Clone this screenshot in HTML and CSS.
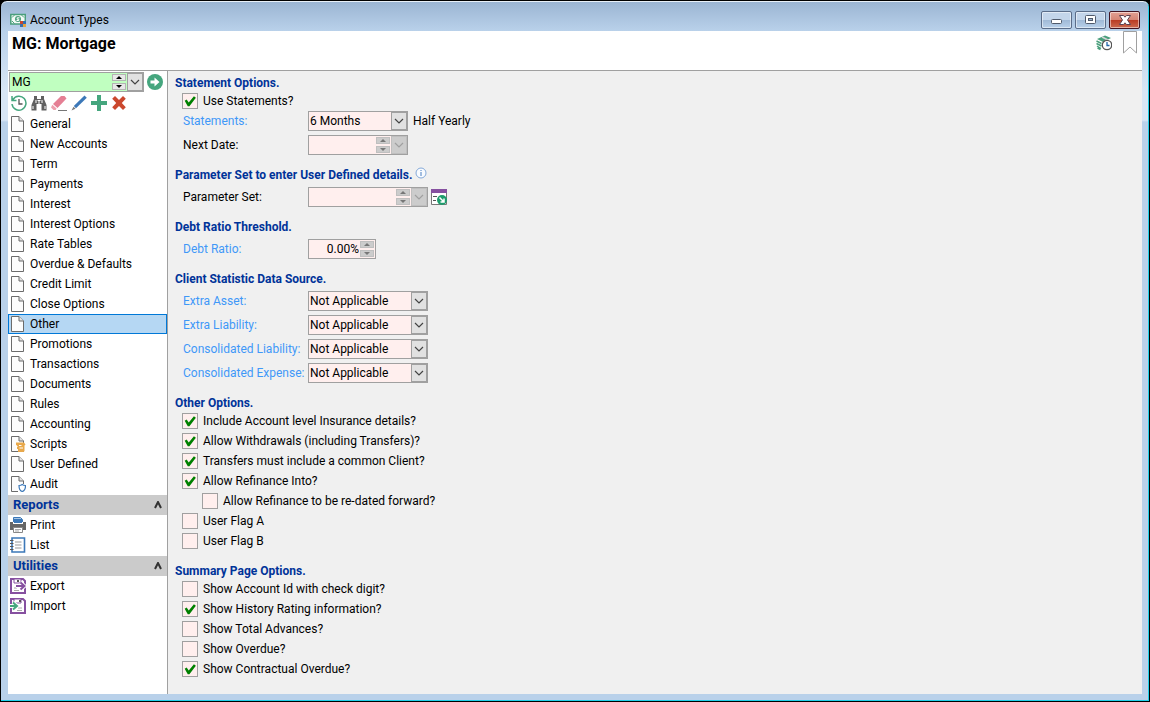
FILE: index.html
```html
<!DOCTYPE html>
<html lang="en">
<head>
  <meta charset="UTF-8" />
  <meta name="viewport" content="width=device-width, initial-scale=1.0"/>
  <title>Account Types</title>
  <link rel="stylesheet" href="styles.css">
</head>
<body>
  <!-- shared icons -->
  <svg class="sprite" aria-hidden="true">
    <symbol id="page" viewBox="0 0 16 16">
      <path d="M1.5 .5H9L13.500 5V15.500H1.500Z" fill="#fcfcfc" stroke="#6b6b6b"/>
      <path d="M9 .5V5h4.500" fill="#e4e4e4" stroke="#6b6b6b"/>
    </symbol>
    <symbol id="chevron" viewBox="0 0 10 6">
      <path d="M1 1l4 4 4-4" fill="none" stroke="currentColor" stroke-width="1.2"/>
    </symbol>
    <symbol id="up" viewBox="0 0 6 3"><path d="M3 0l3 3H0z" fill="currentColor"/></symbol>
    <symbol id="down" viewBox="0 0 6 3"><path d="M0 0h6L3 3z" fill="currentColor"/></symbol>
  </svg>

  <div class="window">
    <header class="titlebar">
      <svg class="icon" viewBox="0 0 16 16">
        <rect x=".8" y="2.500" width="14.500" height="9.500" fill="#f3faf6" stroke="#4a9f7c" stroke-width="1.500"/>
        <path d="M2 5.500L4.500 3M2 9l2.500 2.500M11.500 3L14 5.500" stroke="#4a9f7c"/>
        <circle cx="8" cy="7" r="3" fill="#4a9f7c"/>
        <path d="M9.500 5.800H7.200v1.400h1.600v1.300H6.500" fill="none" stroke="#fff"/>
        <path d="M10 9h3v3h-3z" fill="#c9472b"/><path d="M13 9h3v3h-3z" fill="#2f6fb4"/>
        <path d="M10 12h3v3h-3z" fill="#3a6fae"/><path d="M13 12h3v3h-3z" fill="#e8a33d"/>
      </svg>
      <span class="caption">Account Types</span>
      <div class="window-buttons">
        <button aria-label="Minimize"><svg viewBox="0 0 16 12"><rect x="2.500" y="5.500" width="10" height="4" rx="1" fill="#fff" stroke="#505a6b"/></svg></button>
        <button aria-label="Maximize"><svg viewBox="0 0 16 12"><rect x="2.500" y="1.500" width="10" height="8" rx="1" fill="#fff" stroke="#505a6b"/><rect x="5.500" y="4.500" width="4" height="2" fill="#9db6d2" stroke="#505a6b"/></svg></button>
        <button class="close" aria-label="Close"><svg viewBox="0 0 16 12"><path d="M2.500 1.500h4L8 3.200l1.500-1.700h4L10.500 6l3 4.500h-4L8 8.800l-1.500 1.700h-4L5.500 6z" fill="#fff" stroke="#5b4250"/></svg></button>
      </div>
    </header>

    <div class="content">
      <div class="page-header">
        <h1>MG: Mortgage</h1>
        <div class="header-icons">
          <svg class="icon" viewBox="0 0 16 16">
            <path d="M1 4l8-3.500 6 2.500-8 4z" fill="#4a9f7c"/>
            <path d="M6 2l6 3" stroke="#d5d5d5" stroke-width="1.500"/>
            <path d="M.5 6l5 2.500M.5 8.500l5 2.500M1 11l4 2.500M1.500 13l3 1.500" fill="none" stroke="#4a9f7c" stroke-width="1.400"/>
            <circle cx="11" cy="10" r="4.700" fill="#fff" stroke="#555" stroke-width="1.300"/>
            <path d="M11 7v3.500h2.500" fill="none" stroke="#2367ac" stroke-width="1.300"/>
          </svg>
          <svg class="bookmark" viewBox="0 0 14 23"><path d="M.5 .5h13v21.500L7 16 .5 22z" fill="#fff" stroke="#a0a0a0"/></svg>
        </div>
      </div>

      <div class="columns">
        <nav class="sidebar">
          <div class="picker">
            <div class="field key">
              <input type="text" value="MG" aria-label="Account type">
              <span class="spin"><button aria-label="Previous"><svg><use href="#up"/></svg></button><button aria-label="Next"><svg><use href="#down"/></svg></button></span>
              <button class="drop" aria-label="Open list"><svg><use href="#chevron"/></svg></button>
            </div>
            <button class="tool" aria-label="Go">
              <svg class="icon" viewBox="0 0 16 16"><circle cx="8" cy="8" r="8" fill="#45a67e"/><path d="M3.500 6.500h4V3.500L12.500 8l-5 4.500v-3h-4z" fill="#fff"/></svg>
            </button>
          </div>
          <div class="toolbar">
            <button class="tool" aria-label="History"><svg class="icon" viewBox="0 0 16 16"><path d="M2 4.500A7 7 0 1 1 1 9M1 1v4.500h4.500" fill="none" stroke="#45a67e" stroke-width="1.500"/><path d="M8 4v5h3.500" fill="none" stroke="#555" stroke-width="1.300"/></svg></button>
            <button class="tool" aria-label="Find"><svg class="icon" viewBox="0 0 16 16"><path d="M3 1h3v3h4V1h3v3l2.500 6v5.500h-5V9h-5v6.500h-5V10L3 4z" fill="#606060"/><path d="M5 5v3M11 5v3M6.500 5.500h3M2 11v3M14 11v3M8 5v4" stroke="#fff"/></svg></button>
            <button class="tool" aria-label="Clear"><svg class="icon" viewBox="0 0 16 16"><path d="M10 1h3.500L15.500 3.500 6.500 13 2 9z" fill="#e57f94"/><path d="M1.300 9.800l4.300 3.700-1 1.500H2.500L0 12.500z" fill="#eda0ae"/><path d="M7 15.500h9" stroke="#777"/></svg></button>
            <button class="tool" aria-label="Edit"><svg class="icon" viewBox="0 0 16 16"><path d="M13.500 .5l2.300 2.300L5 13.200 2.800 11z" fill="#3c78b8"/><path d="M2.500 11.700l2 2L.5 15.500z" fill="#777"/></svg></button>
            <button class="tool" aria-label="Add"><svg class="icon" viewBox="0 0 16 16"><path d="M6 0h4v6h6v4h-6v6H6v-6H0V6h6z" fill="#45a67e"/></svg></button>
            <button class="tool" aria-label="Delete"><svg class="icon" viewBox="0 0 16 16"><path d="M4 1l4 4 4-4 2.800 2.800-4 4.200 4 4.200L12 15l-4-4-4 4-2.800-2.800 4-4.200-4-4.200z" fill="#cb482e"/></svg></button>
          </div>

          <ul class="menu">
            <li><a href="#"><svg class="icon"><use href="#page"/></svg>General</a></li>
            <li><a href="#"><svg class="icon"><use href="#page"/></svg>New Accounts</a></li>
            <li><a href="#"><svg class="icon"><use href="#page"/></svg>Term</a></li>
            <li><a href="#"><svg class="icon"><use href="#page"/></svg>Payments</a></li>
            <li><a href="#"><svg class="icon"><use href="#page"/></svg>Interest</a></li>
            <li><a href="#"><svg class="icon"><use href="#page"/></svg>Interest Options</a></li>
            <li><a href="#"><svg class="icon"><use href="#page"/></svg>Rate Tables</a></li>
            <li><a href="#"><svg class="icon"><use href="#page"/></svg>Overdue &amp; Defaults</a></li>
            <li><a href="#"><svg class="icon"><use href="#page"/></svg>Credit Limit</a></li>
            <li><a href="#"><svg class="icon"><use href="#page"/></svg>Close Options</a></li>
            <li><a href="#" class="selected"><svg class="icon"><use href="#page"/></svg>Other</a></li>
            <li><a href="#"><svg class="icon"><use href="#page"/></svg>Promotions</a></li>
            <li><a href="#"><svg class="icon"><use href="#page"/></svg>Transactions</a></li>
            <li><a href="#"><svg class="icon"><use href="#page"/></svg>Documents</a></li>
            <li><a href="#"><svg class="icon"><use href="#page"/></svg>Rules</a></li>
            <li><a href="#"><svg class="icon"><use href="#page"/></svg>Accounting</a></li>
            <li><a href="#"><svg class="icon" viewBox="0 0 16 16"><use href="#page"/><path d="M6 6.500h8l1.500 2-1 1V15l-1 1H8v-3H7V9.500L6 9z" fill="#e9a94b"/><path d="M9 9.500h2.500M9.500 12H13M5.500 10.500h2" stroke="#fff"/></svg>Scripts</a></li>
            <li><a href="#"><svg class="icon"><use href="#page"/></svg>User Defined</a></li>
            <li><a href="#"><svg class="icon" viewBox="0 0 16 16"><use href="#page"/><path d="M8 8h8v8H8z" fill="#fff"/><path d="M9 9.500q2 0 3.200-1 1.300 1 3.300 1 0 5-3.300 6Q9 14.500 9 9.500z" fill="#fff" stroke="#3c78b8" stroke-width="1.200"/></svg>Audit</a></li>
          </ul>

          <h2 class="group">Reports <svg viewBox="0 0 8 8"><path d="M1 7l3-6 3 6" fill="none" stroke="#333" stroke-width="2"/></svg></h2>
          <ul class="menu">
            <li><a href="#"><svg class="icon" viewBox="0 0 16 16"><path d="M3.500 5V.5h7l2 2V5" fill="#a9c6e4" stroke="#3c78b8"/><path d="M4 2h8v4H4z" fill="#3c78b8"/><path d="M0 5h3v2h10V5h3v8h-3v-2H3v2H0z" fill="#666"/><path d="M3.500 10.500h9v5h-9z" fill="#fff" stroke="#888"/><path d="M5 12.500h6M5 14h4" stroke="#aaa"/></svg>Print</a></li>
            <li><a href="#"><svg class="icon" viewBox="0 0 16 16"><path d="M2 1h12.500v14H2z" fill="#fff" stroke="#3c78b8" stroke-width="1.600"/><path d="M5 5h6.500M5 8h6.500M5 11h6.500" stroke="#999"/><path d="M0 3.500h3.500M0 6.500h3.500M0 9.500h3.500M0 12.500h3.500" stroke="#555"/></svg>List</a></li>
          </ul>

          <h2 class="group">Utilities <svg viewBox="0 0 8 8"><path d="M1 7l3-6 3 6" fill="none" stroke="#333" stroke-width="2"/></svg></h2>
          <ul class="menu">
            <li><a href="#"><svg class="icon" viewBox="0 0 16 16"><path d="M1 1h12l2 2v12H1z" fill="#fff" stroke="#8650a0" stroke-width="2"/><path d="M4 1h7v4H4z" fill="#fff" stroke="#8650a0"/><path d="M8 2v2" stroke="#555" stroke-width="2"/><path d="M4 10h3M4 12.500h5" stroke="#aaa"/><path d="M6 8h8M10.500 4.500L14.500 8l-4 3.500" fill="none" stroke="#fff" stroke-width="4"/><path d="M6 8h8M10.500 4.500L14.500 8l-4 3.500" fill="none" stroke="#8650a0" stroke-width="2"/></svg>Export</a></li>
            <li><a href="#"><svg class="icon" viewBox="0 0 16 16"><path d="M1 1h12l2 2v12H1z" fill="#fff" stroke="#8650a0" stroke-width="2"/><path d="M4 1h7v4H4z" fill="#fff" stroke="#8650a0"/><path d="M10 2v2" stroke="#555" stroke-width="2"/><path d="M8 10h4M7 12.500h5" stroke="#aaa"/><path d="M0 8h6M3 4.500L7 8l-4 3.500" fill="none" stroke="#fff" stroke-width="4"/><path d="M0 8h6M3 4.500L7 8l-4 3.500" fill="none" stroke="#45a67e" stroke-width="2"/></svg>Import</a></li>
          </ul>
        </nav>

        <main class="form">
          <section>
            <h2>Statement Options.</h2>
            <label class="check"><input type="checkbox" checked>Use Statements?</label>
            <div class="row">
              <label class="linked" for="statements">Statements:</label>
              <div class="field short">
                <select id="statements"><option>6 Months</option></select>
                <span class="drop"><svg><use href="#chevron"/></svg></span>
              </div>
              <span class="note">Half Yearly</span>
            </div>
            <div class="row">
              <label for="next-date">Next Date:</label>
              <div class="field short disabled">
                <input type="text" id="next-date" disabled>
                <span class="spin"><button disabled aria-label="Later"><svg><use href="#up"/></svg></button><button disabled aria-label="Earlier"><svg><use href="#down"/></svg></button></span>
                <button class="drop" disabled aria-label="Calendar"><svg><use href="#chevron"/></svg></button>
              </div>
            </div>
          </section>

          <section>
            <h2>Parameter Set to enter User Defined details. <svg class="info" viewBox="0 0 12 12"><circle cx="6" cy="6" r="5" fill="#f8fbff" stroke="#84a9d8"/><path d="M6 5v4M6 3v1" stroke="#4a7fc0"/></svg></h2>
            <div class="row">
              <label for="parameter-set">Parameter Set:</label>
              <div class="field disabled">
                <input type="text" id="parameter-set" disabled>
                <span class="spin"><button disabled aria-label="Previous set"><svg><use href="#up"/></svg></button><button disabled aria-label="Next set"><svg><use href="#down"/></svg></button></span>
                <button class="drop" disabled aria-label="Open sets"><svg><use href="#chevron"/></svg></button>
              </div>
              <button class="tool open" aria-label="Open parameter set">
                <svg class="icon" viewBox="0 0 16 16"><path d="M.5 1v14.500h15V1z" fill="#fff" stroke="#777"/><path d="M0 0h16v4H0z" fill="#8650a0"/><path d="M2 7.500h4M2 11.500h3" stroke="#555"/><circle cx="11" cy="11" r="5" fill="#1d9d6c"/><path d="M8.500 8.500l4 4M13 9.500V13H9.500" fill="none" stroke="#fff" stroke-width="1.500"/></svg>
              </button>
            </div>
          </section>

          <section>
            <h2>Debt Ratio Threshold.</h2>
            <div class="row">
              <label class="linked" for="debt-ratio">Debt Ratio:</label>
              <div class="field number">
                <input type="text" id="debt-ratio" value="0.00%">
                <span class="spin dim"><button aria-label="Increase"><svg><use href="#up"/></svg></button><button aria-label="Decrease"><svg><use href="#down"/></svg></button></span>
              </div>
            </div>
          </section>

          <section>
            <h2>Client Statistic Data Source.</h2>
            <div class="row">
              <label class="linked" for="extra-asset">Extra Asset:</label>
              <div class="field"><select id="extra-asset"><option>Not Applicable</option></select><span class="drop"><svg><use href="#chevron"/></svg></span></div>
            </div>
            <div class="row">
              <label class="linked" for="extra-liability">Extra Liability:</label>
              <div class="field"><select id="extra-liability"><option>Not Applicable</option></select><span class="drop"><svg><use href="#chevron"/></svg></span></div>
            </div>
            <div class="row">
              <label class="linked" for="cons-liability">Consolidated Liability:</label>
              <div class="field"><select id="cons-liability"><option>Not Applicable</option></select><span class="drop"><svg><use href="#chevron"/></svg></span></div>
            </div>
            <div class="row">
              <label class="linked" for="cons-expense">Consolidated Expense:</label>
              <div class="field"><select id="cons-expense"><option>Not Applicable</option></select><span class="drop"><svg><use href="#chevron"/></svg></span></div>
            </div>
          </section>

          <section>
            <h2>Other Options.</h2>
            <label class="check"><input type="checkbox" checked>Include Account level Insurance details?</label>
            <label class="check"><input type="checkbox" checked>Allow Withdrawals (including Transfers)?</label>
            <label class="check"><input type="checkbox" checked>Transfers must include a common Client?</label>
            <label class="check"><input type="checkbox" checked>Allow Refinance Into?</label>
            <label class="check child"><input type="checkbox">Allow Refinance to be re-dated forward?</label>
            <label class="check"><input type="checkbox">User Flag A</label>
            <label class="check"><input type="checkbox">User Flag B</label>
          </section>

          <section>
            <h2>Summary Page Options.</h2>
            <label class="check"><input type="checkbox">Show Account Id with check digit?</label>
            <label class="check"><input type="checkbox" checked>Show History Rating information?</label>
            <label class="check"><input type="checkbox">Show Total Advances?</label>
            <label class="check"><input type="checkbox">Show Overdue?</label>
            <label class="check"><input type="checkbox" checked>Show Contractual Overdue?</label>
          </section>
        </main>
      </div>
    </div>
  </div>
</body>
</html>
```
FILE: styles.css
```css
:root {
  --frame: #b9d1ea;
  --line: #a0a0a0;
  --heading: #003399;
  --linked: #3f98f8;
  --field: #ffefee;
  --face: #f0f0f0;
}

* {
  box-sizing: border-box;
}

body {
  margin: 0;
  background: #000;
  color: #000;
  font: 12px/16px "Segoe UI", Roboto, sans-serif;
}

h1, h2, ul {
  margin: 0;
  padding: 0;
}

input, select, button {
  font: inherit;
  color: inherit;
  margin: 0;
  padding: 0;
  border: 0;
  background: none;
}

svg {
  display: block;
}

.sprite {
  position: absolute;
  width: 0;
  height: 0;
}

.icon {
  width: 16px;
  height: 16px;
  flex: none;
}

/* window frame */
.window {
  display: flex;
  flex-direction: column;
  min-height: 100vh;
  padding: 0 7px 7px;
  border: 1px solid #000;
  border-radius: 7px 7px 0 0;
  box-shadow: inset -1px -1px #20d0ea, inset 0 1px #e8f0f8;
  background: linear-gradient(#9ab4d2, var(--frame) 30px, #d8e6f5 90px, #d8e6f5 119px, var(--frame) 121px);
}

.titlebar {
  display: flex;
  align-items: center;
  height: 30px;
  padding: 7px 2px 0;
  gap: 4px;
}

.caption {
  flex: 1;
}

.window-buttons {
  display: flex;
  gap: 3px;
}

.window-buttons button {
  display: flex;
  align-items: center;
  justify-content: center;
  width: 31px;
  height: 18px;
  border: 1px solid #5a6c88;
  border-radius: 2px;
  box-shadow: inset 0 0 0 1px rgba(255, 255, 255, 0.5);
  background: linear-gradient(#c3d5ea 50%, #9fb9d6 50%, #b9d1ea);
}

.window-buttons .close {
  border-color: #431422;
  background: linear-gradient(#e2a093, #d58474 50%, #b93a22 50%, #cc6a50);
}

.window-buttons svg {
  width: 16px;
  height: 12px;
}

.content {
  flex: 1;
  display: flex;
  flex-direction: column;
  background: var(--face);
}

.page-header {
  display: flex;
  justify-content: space-between;
  height: 40px;
  padding: 0 5px 0 4px;
  border-bottom: 1px solid var(--line);
  background: #fff;
}

.page-header h1 {
  padding-top: 2px;
  font-size: 16px;
  line-height: 22px;
}

.header-icons {
  display: flex;
  gap: 11px;
}

.header-icons .icon {
  margin-top: 4px;
}

.bookmark {
  width: 14px;
  height: 23px;
}

.columns {
  flex: 1;
  display: flex;
}

/* left menu */
.sidebar {
  width: 160px;
  flex: none;
  padding-top: 1px;
  border-right: 1px solid var(--line);
  background: #fff;
}

.picker {
  display: flex;
  align-items: center;
  gap: 3px;
  padding-left: 1px;
}

.toolbar {
  display: flex;
  align-items: center;
  gap: 4px;
  height: 22px;
  padding-left: 3px;
}

.menu {
  list-style: none;
}

.menu a {
  display: flex;
  align-items: center;
  gap: 4px;
  height: 20px;
  padding-left: 1px;
  border: 1px solid transparent;
  color: inherit;
  text-decoration: none;
}

.menu .selected {
  border-color: #0078d7;
  background: #b5d7f3;
}

.group {
  display: flex;
  align-items: center;
  justify-content: space-between;
  height: 20px;
  margin-top: 1px;
  padding: 0 5px;
  background: #cbcbcb;
  color: var(--heading);
  font-size: 13px;
}

.group svg {
  width: 8px;
  height: 8px;
}

/* fields */
.field {
  position: relative;
  display: flex;
  width: 120px;
  height: 20px;
  padding: 1px;
  border: 1px solid var(--line);
  background: var(--field);
}

.field input,
.field select {
  flex: 1;
  min-width: 0;
  appearance: none;
  outline: none;
}

.field input {
  padding-left: 1px;
}

.short {
  width: 100px;
}

.number {
  width: 68px;
}

.number input {
  text-align: right;
}

.key {
  width: 135px;
  background: #c0ffc0;
}

.drop {
  display: flex;
  align-items: center;
  justify-content: center;
  width: 16px;
  margin: -1px;
  border: 1px solid var(--line);
  background: #e1e1e1;
  color: #444;
}

/* the arrow lies over the right end of the select */
span.drop {
  position: absolute;
  top: 1px;
  right: 1px;
  bottom: 1px;
  pointer-events: none;
}

.drop svg {
  width: 10px;
  height: 6px;
}

.spin {
  display: flex;
  flex-direction: column;
  justify-content: space-between;
  width: 14px;
  margin: 0 2px 0 1px;
}

.number .spin {
  margin-right: 0;
}

.spin button {
  display: flex;
  align-items: center;
  justify-content: center;
  height: 7px;
  border: 1px solid #b4b4b4;
  background: #e8e8e8;
}

.spin svg {
  width: 6px;
  height: 3px;
}

.disabled .spin button,
.dim button {
  border-color: #bfbfbf;
  background: #cccccc;
  color: #777;
}

.disabled .drop {
  background: #cccccc;
  border-color: #bfbfbf;
  color: #a0a0a0;
}

.tool {
  display: block;
  width: 16px;
  height: 16px;
}

/* form */
.form {
  flex: 1;
  display: flex;
  flex-direction: column;
  gap: 12px;
  padding: 4px 7px 15px;
}

.form h2 {
  display: flex;
  gap: 3px;
  height: 16px;
  color: var(--heading);
  font-size: 12px;
}

.info {
  width: 12px;
  height: 12px;
}

.row {
  display: flex;
  align-items: center;
  padding-left: 8px;
}

.row + .row,
h2 + .row {
  margin-top: 4px;
}

.row label {
  width: 125px;
  white-space: nowrap;
}

.row .linked {
  color: var(--linked);
}

.note {
  margin-left: 5px;
}

.open {
  margin-left: 3px;
}

.check {
  display: flex;
  align-items: center;
  gap: 5px;
  width: max-content;
  height: 20px;
  padding-left: 7px;
}

.child {
  padding-left: 27px;
}

.check input {
  appearance: none;
  width: 16px;
  height: 16px;
  border: 1px solid var(--line);
  background: var(--field);
}

.check input:checked::before {
  content: "";
  display: block;
  width: 14px;
  height: 14px;
  background: #008000;
  clip-path: polygon(12% 48%, 26% 40%, 41% 60%, 78% 16%, 92% 26%, 46% 88%, 34% 88%);
}
```
